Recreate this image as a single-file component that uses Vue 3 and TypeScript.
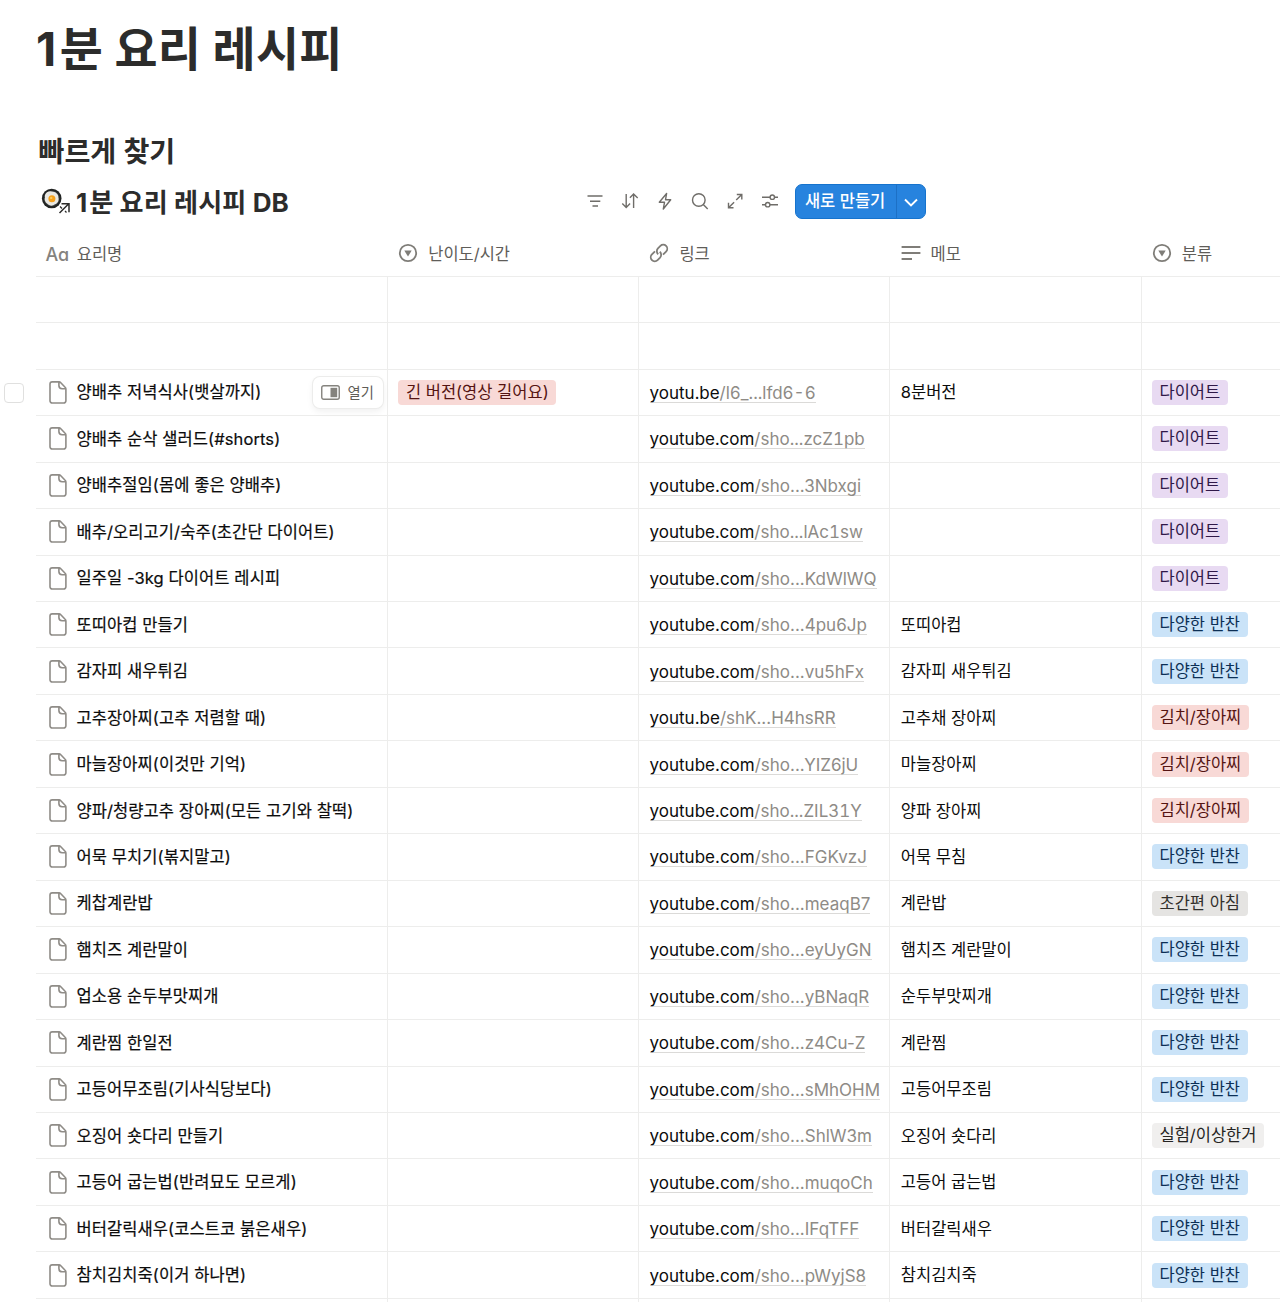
<script setup lang="ts">
type Tone = 'purple' | 'blue' | 'red' | 'gray' | 'light'

interface Recipe {
  name: string
  level?: string
  host: string
  path: string
  memo?: string
  tag: string
  tone: Tone
  hovered?: boolean
}

const yt = 'youtube.com'
const diet = { tag: '다이어트', tone: 'purple' as Tone }
const side = { tag: '다양한 반찬', tone: 'blue' as Tone }
const pickle = { tag: '김치/장아찌', tone: 'red' as Tone }

const recipes: Recipe[] = [
  { name: '양배추 저녁식사(뱃살까지)', level: '긴 버전(영상 길어요)', host: 'youtu.be', path: '/l6_...lfd6-6', memo: '8분버전', ...diet, hovered: true },
  { name: '양배추 순삭 샐러드(#shorts)', host: yt, path: '/sho...zcZ1pb', ...diet },
  { name: '양배추절임(몸에 좋은 양배추)', host: yt, path: '/sho...3Nbxgi', ...diet },
  { name: '배추/오리고기/숙주(초간단 다이어트)', host: yt, path: '/sho...lAc1sw', ...diet },
  { name: '일주일 -3kg 다이어트 레시피', host: yt, path: '/sho...KdWlWQ', ...diet },
  { name: '또띠아컵 만들기', host: yt, path: '/sho...4pu6Jp', memo: '또띠아컵', ...side },
  { name: '감자피 새우튀김', host: yt, path: '/sho...vu5hFx', memo: '감자피 새우튀김', ...side },
  { name: '고추장아찌(고추 저렴할 때)', host: 'youtu.be', path: '/shK...H4hsRR', memo: '고추채 장아찌', ...pickle },
  { name: '마늘장아찌(이것만 기억)', host: yt, path: '/sho...YIZ6jU', memo: '마늘장아찌', ...pickle },
  { name: '양파/청량고추 장아찌(모든 고기와 찰떡)', host: yt, path: '/sho...ZIL31Y', memo: '양파 장아찌', ...pickle },
  { name: '어묵 무치기(볶지말고)', host: yt, path: '/sho...FGKvzJ', memo: '어묵 무침', ...side },
  { name: '케찹계란밥', host: yt, path: '/sho...meaqB7', memo: '계란밥', tag: '초간편 아침', tone: 'gray' },
  { name: '햄치즈 계란말이', host: yt, path: '/sho...eyUyGN', memo: '햄치즈 계란말이', ...side },
  { name: '업소용 순두부맛찌개', host: yt, path: '/sho...yBNaqR', memo: '순두부맛찌개', ...side },
  { name: '계란찜 한일전', host: yt, path: '/sho...z4Cu-Z', memo: '계란찜', ...side },
  { name: '고등어무조림(기사식당보다)', host: yt, path: '/sho...sMhOHM', memo: '고등어무조림', ...side },
  { name: '오징어 숏다리 만들기', host: yt, path: '/sho...ShlW3m', memo: '오징어 숏다리', tag: '실험/이상한거', tone: 'light' },
  { name: '고등어 굽는법(반려묘도 모르게)', host: yt, path: '/sho...muqoCh', memo: '고등어 굽는법', ...side },
  { name: '버터갈릭새우(코스트코 붉은새우)', host: yt, path: '/sho...IFqTFF', memo: '버터갈릭새우', ...side },
  { name: '참치김치죽(이거 하나면)', host: yt, path: '/sho...pWyjS8', memo: '참치김치죽', ...side },
]

const needsTabular = (path: string): boolean => /[1_]/.test(path)
</script>

<template>
  <main class="page">
    <h1><span class="one">1</span>분 요리 레시피</h1>
    <h2>빠르게 찾기</h2>

    <div class="db-bar">
      <svg class="pan" width="32" height="30" viewBox="0 0 32 30">
        <circle cx="12.700" cy="12.500" r="9.8" fill="#222423" />
        <circle cx="12.700" cy="12.500" r="7.8" fill="#3b3f3f" />
        <path d="M8 6.200c2-1.500 4.600-1.200 6.200-.4 2.800.2 5.600 3 5.200 5.700.9 2.700-.6 6.200-3.400 6.800-2 2-6 1.700-7.700-.5C6 16.400 5 13.400 6 11.500 5.300 9.500 6.500 7 8 6.200z" fill="#e9e8e2" />
        <circle cx="12.900" cy="12.800" r="3.500" fill="#f5a01c" />
        <circle cx="12.200" cy="11.900" r="1.200" fill="#fbc95a" />
        <path d="M21 26.500l8.500-8.500M22.500 18H30v7.500" fill="none" stroke="#fff" stroke-width="4" />
        <path d="M20.500 27l9-9M22.500 17.800h7.500v8.500" fill="none" stroke="#2c2c2b" stroke-width="1.500" />
        <path d="M21 20.500l2 2M26 25l1.500 1.500" fill="none" stroke="#2c2c2b" stroke-width="1.300" />
      </svg>
      <h3><span class="one">1</span>분 요리 레시피 DB</h3>
      <div class="tools">
        <svg viewBox="0 0 20 20"><path d="M2.500 5h15M5 10.300h10.300M7.500 15h5.500" /></svg>
        <svg viewBox="0 0 20 20"><path d="M6.200 3v13.500M2.300 12.600l3.900 3.900 3.900-3.900M13.600 17V3M9.900 6.800L13.600 3l4.100 3.900" /></svg>
        <svg viewBox="0 0 20 20"><path d="M11.600 2.500L4.300 11.300h5.200l-1.200 6.700 7.400-9.200h-5.200z" stroke-linejoin="round" /></svg>
        <svg viewBox="0 0 20 20"><circle cx="8.800" cy="9" r="6.300" /><path d="M13.300 13.500l4.400 4.400" /></svg>
        <svg viewBox="0 0 20 20"><path d="M11.800 3.500h5v5M16.800 3.500l-5.600 5.600M3.500 11.800v5h5M3.500 16.800l5.600-5.600" /></svg>
        <svg viewBox="0 0 20 20"><path d="M2 6.200h8M14.600 6.200h3.400M2 13.700h3.400M10 13.700h8" /><circle cx="12.300" cy="6.200" r="2.200" /><circle cx="7.700" cy="13.700" r="2.200" /></svg>
      </div>
      <div class="create">
        <span class="create-label">새로 만들기</span>
        <span class="create-more">
          <svg width="14" height="9" viewBox="0 0 14 9"><path d="M1 1.500l6 6 6-6" fill="none" stroke="#fff" stroke-width="1.900" /></svg>
        </span>
      </div>
    </div>

    <div class="table">
      <div class="row head">
        <div class="cell"><span class="aa">Aa</span><span class="label">요리명</span></div>
        <div class="cell">
          <svg class="ic" viewBox="0 0 20 20"><circle cx="10" cy="10" r="8.200" /><path class="solid" d="M6.300 7.500h7.400L10 13.600z" /></svg><span class="label">난이도/시간</span>
        </div>
        <div class="cell">
          <svg class="ic" viewBox="0 0 20 20"><g transform="rotate(-45 10 10)"><path d="M8.300 6H4a4 4 0 0 0 0 8h3.500a4 4 0 0 0 3.900-4.300M11.700 14H16a4 4 0 0 0 0-8h-3.500a4 4 0 0 0-3.900 4.300" /></g></svg><span class="label">링크</span>
        </div>
        <div class="cell">
          <svg class="ic" viewBox="0 0 20 20"><path d="M.600 4h18.800M.600 10h18.800M.600 16h10.400" /></svg><span class="label">메모</span>
        </div>
        <div class="cell">
          <svg class="ic" viewBox="0 0 20 20"><circle cx="10" cy="10" r="8.200" /><path class="solid" d="M6.300 7.500h7.400L10 13.600z" /></svg><span class="label">분류</span>
        </div>
      </div>

      <div v-for="n in 2" :key="'blank' + n" class="row">
        <div v-for="c in 5" :key="c" class="cell"></div>
      </div>

      <div v-for="r in recipes" :key="r.name" class="row">
        <span v-if="r.hovered" class="check"></span>
        <div class="cell name">
          <svg class="doc" width="18" height="23" viewBox="0 0 18 23">
            <path d="M3.200.900h6.900c.7 0 1.200.3 1.700.8l4.300 4.500c.5.500.8 1 .8 1.700v11.900a2.200 2.200 0 0 1-2.200 2.200H3.200a2.200 2.200 0 0 1-2.200-2.200V3.100A2.200 2.200 0 0 1 3.200.900zM9.900 1v3.600a3.200 3.200 0 0 0 3.200 3.200h3.600" />
          </svg>
          <span class="title">{{ r.name }}</span>
          <span v-if="r.hovered" class="open">
            <svg width="19" height="15" viewBox="0 0 19 15"><rect x=".75" y=".75" width="17.500" height="13.500" rx="2" fill="none" stroke="#85837e" stroke-width="1.400" /><path d="M9.500 2.800h6.700v9.400H9.500z" fill="#85837e" /></svg>
            <span>열기</span>
          </span>
        </div>
        <div class="cell"><span v-if="r.level" class="tag red">{{ r.level }}</span></div>
        <div class="cell"><a class="link" :class="{ tabular: needsTabular(r.path) }">{{ r.host }}<span>{{ r.path }}</span></a></div>
        <div class="cell"><span class="memo">{{ r.memo }}</span></div>
        <div class="cell"><span class="tag" :class="r.tone">{{ r.tag }}</span></div>
      </div>
      <div class="row">
        <div v-for="c in 5" :key="c" class="cell"></div>
      </div>
    </div>
  </main>
</template>

<style>
html,
body {
  background: #fff;
  overflow: hidden;
}
</style>

<style scoped>
.page {
  box-sizing: border-box;
  width: 1280px;
  height: 1302px;
  padding-left: 36px;
  overflow: hidden;
  background: #fff;
  color: #2c2c2b;
  font-family: Inter, 'Noto Sans CJK KR', sans-serif;
}
h1,
h2,
h3 {
  margin: 0;
  font-weight: 700;
  white-space: nowrap;
}
h1 {
  height: 98px;
  line-height: 98px;
  font-size: 46.8px;
  letter-spacing: 0.3px;
}
.one {
  margin-right: 0.07em;
}
h2 {
  height: 51px;
  margin-top: 28px;
  padding-left: 2.5px;
  line-height: 52px;
  font-size: 28.2px;
  font-weight: 600;
}
.db-bar {
  display: flex;
  align-items: center;
  height: 48px;
}
.pan {
  flex: none;
  margin-left: 3px;
}
h3 {
  width: 508.5px;
  margin-left: 5px;
  padding-bottom: 1px;
  font-size: 26.1px;
  letter-spacing: 0.1px;
}
.tools {
  display: flex;
  gap: 15.2px;
}
.tools svg {
  width: 20px;
  height: 20px;
  fill: none;
  stroke: #6f6d69;
  stroke-width: 1.4;
}
.create {
  box-sizing: border-box;
  display: flex;
  width: 131px;
  height: 35px;
  margin-left: 15px;
  border: 1px solid #1673cd;
  border-radius: 7px;
  overflow: hidden;
  background: #2783de;
  color: #fff;
  font-size: 16.5px;
  font-weight: 500;
}
.create-label {
  width: 100px;
  padding-left: 8.5px;
  box-sizing: border-box;
  line-height: 32px;
  white-space: nowrap;
}
.create-more {
  display: flex;
  flex: 1;
  align-items: center;
  justify-content: center;
  border-left: 1px solid #1d70c5;
  padding-top: 3px;
}
.table {
  width: 1356px;
}
.row {
  position: relative;
  box-sizing: border-box;
  display: grid;
  grid-template-columns: 352px 251.2px 251.2px 251.2px 251.2px;
  height: 46.46px;
  border-bottom: 1px solid #ededec;
  font-size: 16.5px;
}
.cell {
  box-sizing: border-box;
  display: flex;
  align-items: center;
  min-width: 0;
  padding-left: 10.4px;
  border-right: 1px solid #ededec;
  color: #0c0c0c;
  white-space: nowrap;
}
.head {
  height: 51.8px;
}
.head .cell {
  gap: 10px;
  border-right: 0;
  color: #5f5d59;
  padding-top: 6px;
}
.head .cell:first-child {
  gap: 7.5px;
  padding-left: 9.5px;
}
.label {
  padding-bottom: 1px;
}
.aa {
  padding-top: 2px;
  color: #85837e;
  font-size: 18px;
  font-weight: 500;
  font-feature-settings: 'cv11';
}
.ic {
  width: 20px;
  height: 20px;
  margin-left: -0.2px;
  fill: none;
  stroke: #7f7d78;
  stroke-width: 1.8;
}
.ic .solid {
  fill: #7f7d78;
  stroke: none;
}
.name {
  position: relative;
  padding-left: 13px;
}
.doc {
  flex: none;
  fill: none;
  stroke: #8f8c87;
  stroke-width: 1.6;
}
.title {
  margin-left: 9.4px;
  padding-bottom: 2px;
  letter-spacing: 0.1px;
  -webkit-text-stroke: 0.2px #0c0c0c;
}
.memo {
  padding-bottom: 2px;
}
.check {
  position: absolute;
  left: -32px;
  top: 13px;
  box-sizing: border-box;
  width: 20px;
  height: 20px;
  border: 1.5px solid #e0e0df;
  border-radius: 4px;
}
.open {
  position: absolute;
  right: 4.5px;
  top: 7px;
  box-sizing: border-box;
  display: flex;
  align-items: center;
  gap: 8px;
  width: 70px;
  height: 31px;
  padding-left: 8px;
  border-radius: 7px;
  background: #fff;
  box-shadow: 0 0 0 1px #ececeb, 0 3px 7px rgba(0, 0, 0, 0.07);
  color: #5f5d59;
  font-size: 14.3px;
}
.open span {
  padding-bottom: 2px;
}
.link {
  padding-top: 2px;
  border-bottom: 1px solid #dbdad8;
  line-height: 18px;
  font-size: 17px;
}
.tabular {
  font-variant-numeric: tabular-nums;
}
.link span {
  color: #8e8b86;
}
.tag {
  height: 25px;
  padding: 0 7.5px;
  border-radius: 4px;
  line-height: 24px;
}
.purple {
  background: #e8daf2;
  color: #301848;
}
.blue {
  background: #cae3f8;
  color: #0c2f55;
}
.red {
  background: #f8d9d6;
  color: #551412;
}
.gray {
  background: #e5e4e2;
  color: #32302c;
}
.light {
  background: #f0efee;
  color: #252422;
}
</style>
